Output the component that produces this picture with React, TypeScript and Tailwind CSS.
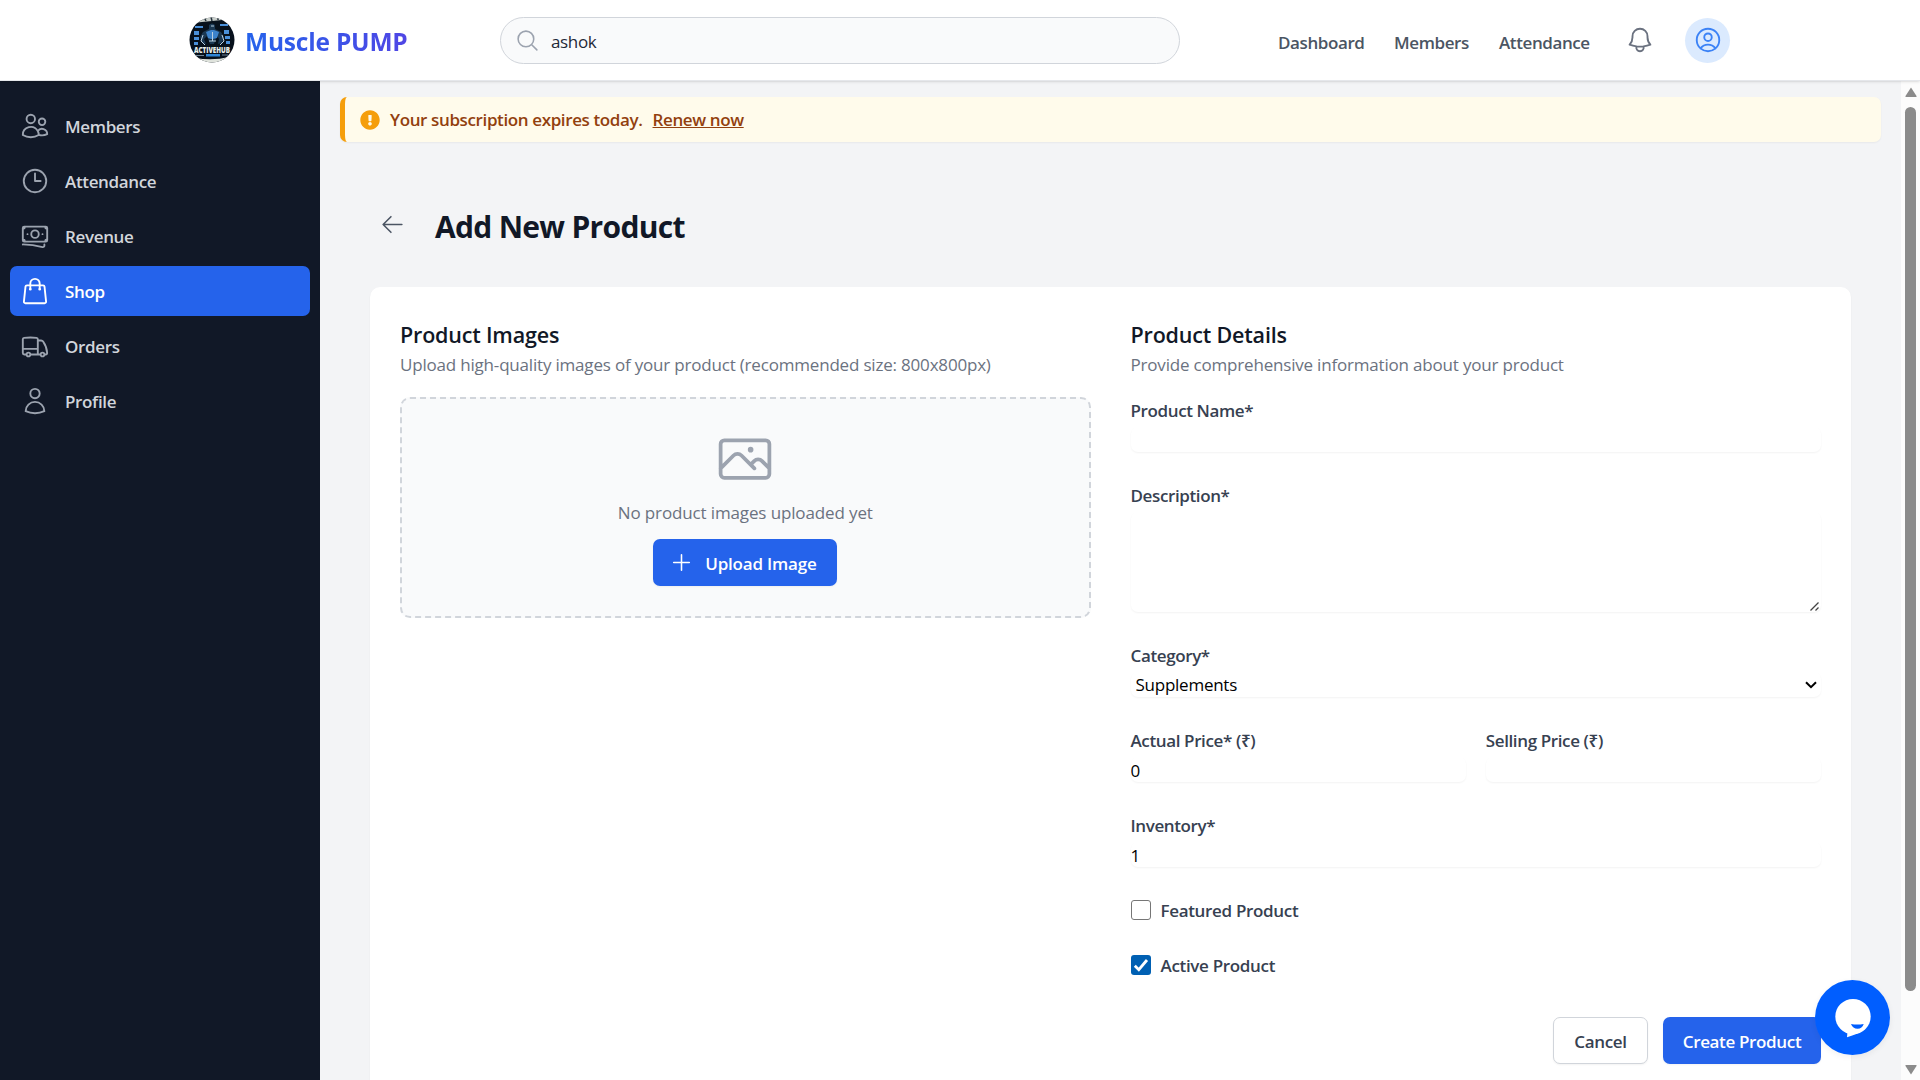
import {
  HiOutlineArrowLeft, HiOutlineBanknotes, HiOutlineBell, HiOutlineClock, HiOutlineMagnifyingGlass,
  HiOutlinePhoto, HiOutlinePlus, HiOutlineShoppingBag, HiOutlineTruck, HiOutlineUser,
  HiOutlineUserCircle, HiOutlineUsers,
} from "react-icons/hi2";
import { FaExclamationCircle } from "react-icons/fa";

const NAV = [
  { label: "Members", Icon: HiOutlineUsers },
  { label: "Attendance", Icon: HiOutlineClock },
  { label: "Revenue", Icon: HiOutlineBanknotes },
  { label: "Shop", Icon: HiOutlineShoppingBag, active: true },
  { label: "Orders", Icon: HiOutlineTruck },
  { label: "Profile", Icon: HiOutlineUser },
];

function Logo() {
  return (
    <svg viewBox="0 0 46 46" className="h-[46px] w-[46px] shrink-0 overflow-visible">
      <defs>
        <clipPath id="disc"><circle cx="23" cy="23" r="22.5" /></clipPath>
      </defs>
      <g clipPath="url(#disc)">
        <rect width="46" height="46" fill="#07111c" />
        <path d="M8 5.5 L38 2.5 V0 H8Z" fill="#c9cfcb" />
        <path d="M15 0l2 4M22 0l1 4M29 0v3" stroke="#26323c" strokeWidth="1.5" />
        <path d="M6 41 Q24 44 40 40 V46 H6Z" fill="#dfe3dc" />
        <path d="M6 9h8v2H6zM31 7h8v2h-8zM5 14h5v4H5zM5 20h5v3H5zM5 25h4v3H5zM35 13h5v4h-5zM36 19h5v3h-5zM37 24h4v3h-4z" fill="#4a90d9" />
        <path d="M20 8q3-3 6 0v4l6 3 3 5-2 6-4 1 1-5-2-3-3 8h-4l-3-8-3 3 2 5-4-1-2-6 3-5 6-3z" fill="#1b3853" />
        <path d="M17 15l5-2h3l5 2-2 6-4 1h-2l-3-1z" fill="#3d83cc" />
        <path d="M14 18l-2 6 4 4M33 18l2 6-4 4M20 24h7M23.5 15v9M22 9h3" stroke="#b9cfe0" strokeWidth="1" fill="none" />
        <rect x="17" y="37" width="14" height="2.5" fill="#2f86d6" />
        <path d="M7 38.5h8M33 38h6" stroke="#6f8596" />
      </g>
      <text x="5" y="36" fontSize="8" fontWeight="800" textLength="36" lengthAdjust="spacingAndGlyphs" fill="#e8eee9">ACTIVEHUB</text>
    </svg>
  );
}

function Header() {
  return (
    <header className="relative z-10 flex h-[81px] shrink-0 items-center border-b border-gray-200 bg-white pl-[189px] shadow-sm">
      <div className="flex w-[311px] items-center gap-[10px]">
        <Logo />
        <span className="bg-[linear-gradient(to_right,#2563eb,#4f46e5)] bg-clip-text pt-[4px] text-[24.5px] font-bold tracking-[-0.2px] text-transparent">Muscle PUMP</span>
      </div>
      <div className="flex h-[47px] w-[680px] items-center gap-[11px] rounded-full border border-[#d1d5db] bg-[#f9fafb] pl-[14px]">
        <HiOutlineMagnifyingGlass className="h-[25px] w-[25px] text-[#9ca3af]" />
        <span className="pt-[3px] text-[17px] tracking-[-0.35px] text-[#1f2937]">ashok</span>
      </div>
      <nav className="ml-[98px] flex gap-[30px] pt-[6px] text-[17px] font-semibold tracking-[-0.4px] text-[#4b5563]">
        <span className="w-[86px] whitespace-nowrap">Dashboard</span>
        <span className="w-[75px] whitespace-nowrap">Members</span>
        <span className="w-[92px] whitespace-nowrap">Attendance</span>
      </nav>
      <HiOutlineBell className="ml-[34px] h-[30px] w-[30px] text-[#6b7280]" />
      <div className="ml-[30px] flex h-[45px] w-[45px] items-center justify-center rounded-full bg-[#dbeafe]">
        <HiOutlineUserCircle className="h-[30px] w-[30px] text-[#3b82f6]" />
      </div>
    </header>
  );
}

function Sidebar() {
  return (
    <aside className="flex w-[320px] shrink-0 flex-col gap-[5px] bg-[#111827] px-[10px] pt-[20px]">
      {NAV.map(({ label, Icon, active }) => (
        <div key={label} className={active
          ? "flex h-[50px] items-center gap-[15px] rounded-[7px] bg-[#2563eb] px-[10px] text-white"
          : "flex h-[50px] items-center gap-[15px] rounded-[7px] px-[10px] text-[#d1d5db]"}>
          <Icon className={active ? "h-[30px] w-[30px]" : "h-[30px] w-[30px] text-[#9ca3af]"} />
          <span className="pt-[2px] text-[17px] font-semibold tracking-[-0.35px]">{label}</span>
        </div>
      ))}
    </aside>
  );
}

function FieldLabel({ children }: { children: string }) {
  return <span className="block h-[25px] text-[17px] leading-[27px] font-semibold tracking-[-0.38px] text-[#374151]">{children}</span>;
}

function Field({ label, value = "" }: { label: string; value?: string }) {
  return (
    <label className="block flex-1">
      <FieldLabel>{label}</FieldLabel>
      <input defaultValue={value} className="mt-[5px] block h-[25px] w-full rounded-[7px] pt-[2px] text-[17px] text-black shadow-xs outline-none" />
    </label>
  );
}

function Check({ label, checked = false }: { label: string; checked?: boolean }) {
  return (
    <div className="flex h-[25px] items-center gap-[10px]">
      {checked ? (
        <svg viewBox="0 0 20 20" className="h-[20px] w-[20px]">
          <rect width="20" height="20" rx="3" fill="#0060b3" />
          <path d="M3.8 10.8l4 3.9L16 5" fill="none" stroke="#fff" strokeWidth="2.8" />
        </svg>
      ) : (
        <span className="h-[20px] w-[20px] rounded-[3px] border border-[#767676] bg-white" />
      )}
      <span className="pt-[2px] text-[17px] font-semibold tracking-[-0.33px] text-[#374151]">{label}</span>
    </div>
  );
}

function SectionTitle({ title, hint }: { title: string; hint: string }) {
  return (
    <>
      <h2 className="h-[30px] text-[21.5px] leading-[33px] font-semibold tracking-[-0.18px] text-[#111827]">{title}</h2>
      <p className="mt-[4px] h-[25px] text-[17px] leading-[26px] tracking-[-0.19px] whitespace-nowrap text-[#6b7280]">{hint}</p>
    </>
  );
}

function ImagesPanel() {
  return (
    <section className="min-w-0 flex-1">
      <SectionTitle title="Product Images" hint="Upload high-quality images of your product (recommended size: 800x800px)" />
      <div className="mt-[20px] flex h-[221px] flex-col items-center rounded-[10px] border-2 border-dashed border-[#d1d5db] bg-[#f9fafb] pt-[30px]">
        <HiOutlinePhoto className="h-[60px] w-[60px] text-[#9ca3af]" />
        <p className="mt-[11px] text-[17px] leading-[25px] tracking-[-0.13px] text-[#6b7280]">No product images uploaded yet</p>
        <button className="mt-[14px] flex h-[47px] w-[184px] items-center rounded-[7px] bg-[#2563eb] pl-[16px] text-white shadow-xs">
          <HiOutlinePlus className="h-[25px] w-[25px]" />
          <span className="ml-[11px] pt-[2px] text-[17px] font-semibold tracking-[-0.2px]">Upload Image</span>
        </button>
      </div>
    </section>
  );
}

function DetailsPanel() {
  return (
    <section className="min-w-0 flex-1">
      <SectionTitle title="Product Details" hint="Provide comprehensive information about your product" />
      <div className="mt-[20px] flex flex-col gap-[30px]">
        <Field label="Product Name*" />
        <label className="block">
          <FieldLabel>Description*</FieldLabel>
          <span className="relative mt-[5px] block">
            <textarea className="block h-[100px] w-full resize-none rounded-[7px] shadow-xs outline-none" />
            <svg viewBox="0 0 9 9" className="absolute right-[2px] bottom-[1px] h-[9px] w-[9px]">
              <path d="M0.5 8.5L8.5 .5M5.5 8.5L8.5 5.5" stroke="#444" strokeWidth="1.3" />
            </svg>
          </span>
        </label>
        <label className="block">
          <FieldLabel>Category*</FieldLabel>
          <span className="relative mt-[5px] block">
            <select className="block h-[25px] w-full appearance-none rounded-[7px] pt-px pl-[5px] text-[17px] leading-[24px] tracking-[-0.25px] text-black shadow-xs outline-none">
              <option>Supplements</option>
            </select>
            <svg viewBox="0 0 12 8" className="absolute top-[9px] right-[4px] h-[8px] w-[12px]">
              <path d="M1 1.2l5 5 5-5" fill="none" stroke="#000" strokeWidth="2" />
            </svg>
          </span>
        </label>
        <div className="flex gap-[20px]">
          <Field label="Actual Price* (₹)" value="0" />
          <Field label="Selling Price (₹)" />
        </div>
        <Field label="Inventory*" value="1" />
        <Check label="Featured Product" />
        <Check label="Active Product" checked />
      </div>
      <div className="mt-[40px] flex justify-end gap-[15px]">
        <button className="h-[47px] w-[95px] rounded-[7px] border border-[#d1d5db] bg-white pt-[2px] text-[17px] font-semibold tracking-[-0.3px] text-[#374151] shadow-xs">Cancel</button>
        <button className="h-[47px] w-[158px] rounded-[7px] bg-[#2563eb] pt-[2px] text-[17px] font-semibold tracking-[-0.35px] whitespace-nowrap text-white shadow-xs">Create Product</button>
      </div>
    </section>
  );
}

function Scrollbar() {
  return (
    <div className="flex w-[19px] shrink-0 flex-col items-center bg-[#fcfcfc]">
      <svg viewBox="0 0 12 10" className="mt-[6px] h-[10px] w-[12px]"><path d="M6 0.5L11.5 9Q12 10 11 10H1Q0 10 .5 9Z" fill="#8b8b8b" /></svg>
      <div className="mt-[10px] h-[884px] w-[11px] rounded-full bg-[#8b8b8b]" />
      <svg viewBox="0 0 12 10" className="mt-auto mb-[5px] h-[10px] w-[12px]"><path d="M6 9.5L.5 1Q0 0 1 0H11Q12 0 11.5 1Z" fill="#8b8b8b" /></svg>
    </div>
  );
}

export default function App() {
  return (
    <div className="flex h-[1080px] w-[1920px] flex-col overflow-hidden bg-[#f3f4f6] font-['Open_Sans','Noto_Sans',sans-serif]">
      <Header />
      <div className="flex min-h-0 flex-1">
        <Sidebar />
        <main className="min-w-0 flex-1 overflow-hidden pt-[16px] pr-[20px] pl-[20px]">
          <div className="flex h-[45px] items-center rounded-[7px] border-l-[5px] border-[#f59e0b] bg-[#fffbeb] pl-[15px] text-[17px] font-semibold tracking-[-0.38px] text-[#92400e] shadow-xs">
            <FaExclamationCircle className="h-[20px] w-[20px] text-[#f59e0b]" />
            <span className="ml-[10px] pt-px">Your subscription expires today.</span>
            <span className="ml-[10px] pt-px underline">Renew now</span>
          </div>
          <div className="mt-[61px] flex h-[42px] items-center pl-[40px]">
            <HiOutlineArrowLeft className="h-[25px] w-[25px] text-[#4b5563]" />
            <h1 className="ml-[30px] pt-[5px] text-[30px] leading-[38px] font-bold tracking-[-0.7px] text-[#111827]">Add New Product</h1>
          </div>
          <div className="mt-[42px] mr-[30px] ml-[30px] flex h-[850px] gap-[40px] rounded-[10px] bg-white px-[30px] pt-[31px] shadow-xs">
            <ImagesPanel />
            <DetailsPanel />
          </div>
        </main>
        <Scrollbar />
      </div>
      <div className="fixed top-[980px] left-[1815px] z-20 h-[75px] w-[75px] rounded-full shadow-[0_2px_6px_rgba(0,0,0,0.06)]">
        <svg viewBox="0 0 75 75" className="h-full w-full">
          <circle cx="37.5" cy="37.5" r="37.5" fill="#005eff" />
          <circle cx="38" cy="36.6" r="17.7" fill="#fff" />
          <path d="M32.5 52L32 57.3Q43 54 50 49L44 45Z" fill="#fff" />
          <path d="M36 44q6 1 12.700 0q-1.500 4.800-6.200 4.800T36 44Z" fill="#005eff" />
        </svg>
      </div>
    </div>
  );
}
